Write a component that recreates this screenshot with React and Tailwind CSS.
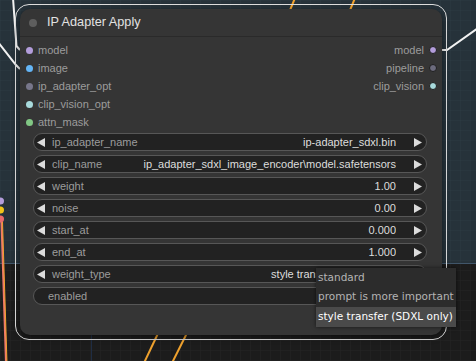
import React from "react";

const Tri = ({ dir }) => (
  <svg width="8" height="9" viewBox="0 0 8 9" className="shrink-0">
    <polygon points={dir === "left" ? "8,0 8,9 0,4.5" : "0,0 0,9 8,4.5"} fill="#dcdcdc" />
  </svg>
);

export default function App() {
  const inputs = [
    ["model", "#b39ddb"],
    ["image", "#64b5f6"],
    ["ip_adapter_opt", "#77768a"],
    ["clip_vision_opt", "#a8dadc"],
    ["attn_mask", "#81c784"],
  ];
  const outputs = [
    ["model", "#b39ddb"],
    ["pipeline", "#6c6b7d"],
    ["clip_vision", "#a8dadc"],
  ];
  const widgets = [
    ["ip_adapter_name", "ip-adapter_sdxl.bin"],
    ["clip_name", "ip_adapter_sdxl_image_encoder\\model.safetensors"],
    ["weight", "1.00"],
    ["noise", "0.00"],
    ["start_at", "0.000"],
    ["end_at", "1.000"],
    ["weight_type", "style transfer (SDXL only)"],
  ];
  const menu = ["standard", "prompt is more important", "style transfer (SDXL only)"];

  return (
    <div className="relative w-[476px] h-[361px] overflow-hidden bg-[#1c1c1c] font-['Liberation_Sans',Arial,sans-serif]">
      <svg className="absolute inset-0" width="476" height="361">
        <defs>
          <pattern id="g1" width="10" height="10" patternUnits="userSpaceOnUse">
            <path d="M10 0 L0 0 0 10" fill="none" stroke="#2c3a42" strokeWidth="1" />
          </pattern>
          <pattern id="g2" width="10" height="10" patternUnits="userSpaceOnUse">
            <path d="M10 0 L0 0 0 10" fill="none" stroke="#252525" strokeWidth="1" />
          </pattern>
        </defs>
        <rect x="0" y="0" width="476" height="263" fill="#26323a" />
        <rect x="0" y="0" width="476" height="263" fill="url(#g1)" />
        <rect x="0" y="263" width="476" height="98" fill="url(#g2)" />
        <line x1="0" y1="263.5" x2="476" y2="263.5" stroke="#41566a" strokeWidth="1" />
        <line x1="91.5" y1="263" x2="91.5" y2="361" stroke="#1f2d44" strokeWidth="1" />
        <line x1="286" y1="20" x2="295" y2="-2" stroke="#f0a22e" strokeWidth="2" />
        <line x1="346" y1="20" x2="355" y2="-2" stroke="#f0a22e" strokeWidth="2" />
        <line x1="162" y1="325" x2="144" y2="363" stroke="#f0a22e" strokeWidth="2" />
        <line x1="191" y1="325" x2="172" y2="363" stroke="#f0a22e" strokeWidth="2" />
        <line x1="1.5" y1="222" x2="6" y2="363" stroke="#f07a6a" strokeWidth="2" />
        <line x1="2.5" y1="222" x2="7" y2="363" stroke="#f0a22e" strokeWidth="1" />
        <circle cx="0.5" cy="201" r="3.5" fill="#b39ddb" />
        <circle cx="0.5" cy="210" r="3.5" fill="#f0c419" />
        <circle cx="0.5" cy="219" r="3.5" fill="#e86a6a" />
        <polyline points="13,-2 16.5,46 20,50" fill="none" stroke="#f2f2f2" strokeWidth="2" />
        <polyline points="-2,42 16,65 20,69" fill="none" stroke="#f2f2f2" strokeWidth="2" />
        <polyline points="440,50 447,50 478,28" fill="none" stroke="#f2f2f2" strokeWidth="2" />
      </svg>

      <div className="absolute left-[15px] top-[4px] w-[432px] h-[336px] border border-[#dedede] rounded-[14px] p-[4px]">
        <div className="h-full rounded-[10px] bg-[#353535] flex flex-col shadow-[0_2px_6px_rgba(0,0,0,0.5)]">
          <div className="h-[28px] shrink-0 flex items-center border-b border-[#2a2a2a] pl-[9px] gap-[10px]">
            <div className="w-[8px] h-[8px] rounded-full bg-[#5e5e5e]" />
            <span className="text-[12.7px] text-[#e2e2e2] leading-none">IP Adapter Apply</span>
          </div>
          <div className="flex justify-between pt-[4px] text-[11px] text-[#9c9c9c]">
            <div className="flex flex-col pl-[6px]">
              {inputs.map(([n, c]) => (
                <div key={n} className="h-[18px] flex items-center gap-[5px]">
                  <div className="w-[7px] h-[7px] rounded-full" style={{ backgroundColor: c }} />
                  <span>{n}</span>
                </div>
              ))}
            </div>
            <div className="flex flex-col pr-[5px] items-end">
              {outputs.map(([n, c]) => (
                <div key={n} className="h-[18px] flex items-center gap-[5px]">
                  <span>{n}</span>
                  <div className="w-[8px] h-[8px] rounded-full border border-[#1e1e1e]" style={{ backgroundColor: c }} />
                </div>
              ))}
            </div>
          </div>
          <div className="flex flex-col gap-[4px] mt-[2px] pl-[13px] pr-[15px] text-[11px]">
            {widgets.map(([l, v]) => (
              <div key={l} className="h-[18px] rounded-full border border-[#575757] bg-[#222222] flex items-center pl-[3px] pr-[4px]">
                <Tri dir="left" />
                <span className="ml-[7px] text-[#9c9c9c] whitespace-nowrap">{l}</span>
                <span className="flex-1 min-w-0 text-right text-[#dddddd] whitespace-nowrap overflow-hidden pl-[8px]">{v}</span>
                <span className="ml-[18px] flex"><Tri dir="right" /></span>
              </div>
            ))}
            <div className="h-[18px] rounded-full border border-[#575757] bg-[#222222] flex items-center pl-[14px]">
              <span className="text-[#9c9c9c]">enabled</span>
            </div>
          </div>
        </div>
      </div>

      <div className="absolute left-[316px] top-[268px] w-[140px] bg-[#2c2c2c] shadow-[0_0_4px_rgba(0,0,0,0.6)] font-['DejaVu_Sans',sans-serif] text-[10.5px]">
        {menu.map((m, i) => (
          <div
            key={m}
            className={
              i === 2
                ? "h-[19.5px] flex items-center px-[2px] bg-[#4a4a4a] text-white whitespace-nowrap"
                : "h-[19.5px] flex items-center px-[2px] text-[#b4b4b4] whitespace-nowrap"
            }
          >
            {m}
          </div>
        ))}
      </div>
    </div>
  );
}
